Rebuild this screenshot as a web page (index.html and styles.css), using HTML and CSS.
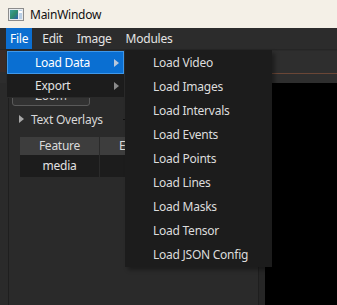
FILE: index.html
```html
<!DOCTYPE html>
<html>
<head>
<meta charset="utf-8">
<link rel="stylesheet" href="styles.css">
</head>
<body>
<div class="window">
  <div class="titlebar">
    <svg class="app-icon" width="16" height="13" viewBox="0 0 16 13">
      <defs>
        <linearGradient id="g" x1="0" y1="0" x2="1" y2="1">
          <stop offset="0" stop-color="#3aa0a0"/>
          <stop offset="0.5" stop-color="#2f8c6a"/>
          <stop offset="1" stop-color="#2a5fb0"/>
        </linearGradient>
      </defs>
      <rect x="0.5" y="0.5" width="15" height="12" fill="#e8ecef" stroke="#8c8c8c"/>
      <rect x="2" y="2" width="8" height="9" fill="url(#g)"/>
      <rect x="11" y="2" width="3" height="9" fill="#b9cfe6"/>
      <rect x="11" y="3" width="3" height="2" fill="#ffffff"/>
    </svg>
    <span class="title">MainWindow</span>
  </div>
  <div class="menubar">
    <span class="menu-item active">File</span>
    <span class="menu-item">Edit</span>
    <span class="menu-item">Image</span>
    <span class="menu-item">Modules</span>
  </div>
  <div class="main">
    <div class="left-panel">
      <div class="toolbar-strip"><span class="brown"></span></div>
      <div class="panel-body">
        <div class="panel-content">
          <button class="zoom-btn">Zoom</button>
          <div class="group-head">
            <span class="tri"></span>
            <span class="group-title">Text Overlays</span>
            <span class="group-line"></span>
          </div>
          <div class="table">
            <div class="thead">
              <div class="th col1">Feature</div>
              <div class="th col2">E</div>
            </div>
            <div class="trow">
              <div class="td col1">media</div>
              <div class="td col2"></div>
            </div>
          </div>
        </div>
      </div>
    </div>
    <div class="splitter"></div>
    <div class="view">
      <div class="view-toolbar"><span class="view-line"></span></div>
      <div class="canvas"></div>
    </div>
  </div>

  <div class="dropdown">
    <div class="dd-item hl"><span>Load Data</span><span class="arrow"></span></div>
    <div class="dd-item"><span>Export</span><span class="arrow dim"></span></div>
  </div>

  <div class="submenu">
    <div class="sub-item">Load Video</div>
    <div class="sub-item">Load Images</div>
    <div class="sub-item">Load Intervals</div>
    <div class="sub-item">Load Events</div>
    <div class="sub-item">Load Points</div>
    <div class="sub-item">Load Lines</div>
    <div class="sub-item">Load Masks</div>
    <div class="sub-item">Load Tensor</div>
    <div class="sub-item">Load JSON Config</div>
  </div>
</div>
</body>
</html>
```

FILE: styles.css
```css
* { box-sizing: border-box; }
html, body { margin: 0; padding: 0; }
body {
  width: 337px;
  height: 305px;
  overflow: hidden;
  font-family: "Noto Sans", "Open Sans", sans-serif;
  font-size: 12px;
  letter-spacing: -0.25px;
  background: #2a2a2a;
}
.window {
  position: relative;
  width: 337px;
  height: 305px;
  display: flex;
  flex-direction: column;
}
.titlebar {
  height: 28px;
  background: #f4f0e7;
  display: flex;
  align-items: center;
  padding-left: 8px;
  gap: 6px;
  flex: none;
}
.app-icon { display: block; }
.title { color: #111; font-size: 12px; }
.menubar {
  height: 22px;
  background: #2c2c2c;
  display: flex;
  align-items: stretch;
  padding-left: 6px;
  gap: 6px;
  flex: none;
  border-bottom: 1px solid #262626;
}
.menu-item {
  color: #e4e4e4;
  padding: 0 4px;
  display: flex;
  align-items: center;
}
.menu-item.active { background: #0b6fd1; color: #fff; }

.main { flex: 1; display: flex; min-height: 0; }
.left-panel { width: 258px; display: flex; flex-direction: column; background: #2a2a2a; }
.toolbar-strip { height: 33px; background: #2d2d2d; position: relative; }
.brown { display: block; width: 6px; height: 22px; background: #3b2b26; }
.panel-body { flex: 1; display: flex; border-left: 1px solid #1e1e1e; margin-left: 8px; }
.panel-content { padding: 1px 0 0 3px; display: flex; flex-direction: column; flex: 1; }
.zoom-btn {
  width: 78px;
  height: 22px;
  margin-left: 0;
  background: #323232;
  border: 1px solid #5a5a5a;
  border-radius: 3px;
  color: #cfcfcf;
  font-family: inherit;
  font-size: 12px;
  letter-spacing: inherit;
  padding: 0;
}
.group-head { display: flex; align-items: center; height: 26px; padding-left: 7px; margin-top: 0; }
.tri {
  width: 0; height: 0;
  border-top: 4px solid transparent;
  border-bottom: 4px solid transparent;
  border-left: 5px solid #a8a8a8;
  margin-right: 7px;
}
.group-title { color: #d8d8d8; }
.group-line { flex: 1; height: 1px; background: #111; margin-left: 20px; margin-right: 10px; }
.table { margin-left: 8px; margin-top: 5px; width: 200px; }
.thead { display: flex; height: 18px; background: #3d3d3d; }
.th { color: #dadada; text-align: center; line-height: 18px; }
.th.col2 { text-align: left; padding-left: 19px; }
.col1 { width: 80px; border-right: 1px solid #2a2a2a; }
.col2 { flex: 1; }
.trow { display: flex; height: 22px; background: #1c1c1c; }
.td { color: #e2e2e2; text-align: center; line-height: 22px; }
.splitter { width: 7px; border-left: 1px solid #1e1e1e; background: #262626; }
.view { flex: 1; display: flex; flex-direction: column; }
.view-toolbar { height: 33px; background: #2e2e2e; display: flex; flex-direction: column; justify-content: flex-start; padding-top: 22px; border-top: 1px solid #2a2a2a; }
.view-line { height: 1px; background: #6a4636; display: block; }
.canvas { flex: 1; background: #000; }

.dropdown {
  position: absolute;
  left: 6px;
  top: 50px;
  width: 119px;
  height: 48px;
  background: #1c1c1c;
  border: 1px solid #2a2a2a;
  padding: 0;
}
.dd-item {
  height: 23px;
  display: flex;
  align-items: center;
  justify-content: space-between;
  padding-left: 27px;
  padding-right: 4px;
  color: #e2e2e2;
  border: 1px solid transparent;
}
.dd-item.hl { background: #0a6fd2; border-color: #3f98ea; color: #fff; }
.arrow {
  width: 0; height: 0;
  border-top: 4px solid transparent;
  border-bottom: 4px solid transparent;
  border-left: 5px solid #b8c8dc;
}
.arrow.dim { border-left-color: #8a8a8a; }

.submenu {
  position: absolute;
  left: 125px;
  top: 50px;
  width: 147px;
  height: 217px;
  background: #1c1c1c;
  padding-top: 1px;
  box-shadow: 3px 3px 4px rgba(0,0,0,0.35);
}
.sub-item {
  height: 24px;
  line-height: 24px;
  padding-left: 28px;
  color: #dcdcdc;
}
```
